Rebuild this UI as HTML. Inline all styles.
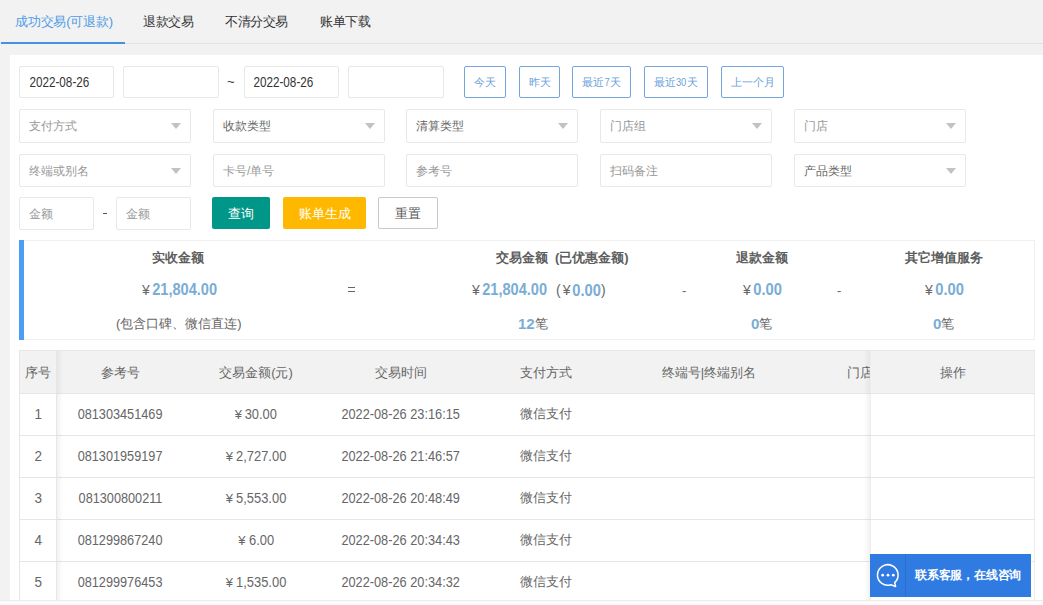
<!DOCTYPE html>
<html><head><meta charset="utf-8">
<style>
*{box-sizing:border-box;margin:0;padding:0}
html,body{width:1043px;height:605px;overflow:hidden;background:#f2f2f2;font-family:"Liberation Sans",sans-serif;color:#666}
.a{position:absolute}
.t{position:absolute;white-space:nowrap;line-height:1}
.sx{display:inline-block;transform-origin:50% 50%}
.box{position:absolute;background:#fff;border:1px solid #e8e8e8;border-radius:2px}
.sel::after{content:"";position:absolute;right:9px;top:13px;border-left:5px solid transparent;border-right:5px solid transparent;border-top:6px solid #c2c2c2}
.bb{position:absolute;border:1px solid #74a6dd;border-radius:2px;background:#fff;color:#6a9fdb;font-size:11px;line-height:31px;text-align:center;height:32px;top:66px}
.btn{position:absolute;top:197px;height:32px;border-radius:2px;font-size:13px;line-height:34px;text-align:center}
.th{position:absolute;top:350px;height:43px;line-height:45px;font-size:13px;color:#666;text-align:center;white-space:nowrap}
.num{color:#7aadd5;font-weight:bold}
.td{position:absolute;height:42px;line-height:42px;font-size:15px;color:#666;text-align:center;white-space:nowrap}
</style></head><body>
<!-- tabs -->
<div class="a" style="left:0;top:0;width:1043px;height:44px;border-bottom:1px solid #e2e2e2"></div>
<div class="a" style="left:1px;top:42px;width:124px;height:2px;background:#4391e2"></div>
<div class="t" id="tab1" style="left:15px;top:15px;font-size:13px;letter-spacing:-0.2px;color:#4d9be6">成功交易(可退款)</div>
<div class="t" id="tab2" style="letter-spacing:-0.4px;left:143px;top:15px;font-size:13px;color:#333">退款交易</div>
<div class="t" id="tab3" style="letter-spacing:-0.4px;left:225px;top:15px;font-size:13px;color:#333">不清分交易</div>
<div class="t" id="tab4" style="letter-spacing:-0.4px;left:320px;top:15px;font-size:13px;color:#333">账单下载</div>
<div class="a" style="left:10px;top:55px;width:1040px;height:546px;background:#fff"></div>
<div class="box" style="left:19px;top:66px;width:95px;height:32px"></div>
<div class="box" style="left:123px;top:66px;width:96px;height:32px"></div>
<div class="box" style="left:244px;top:66px;width:95px;height:32px"></div>
<div class="box" style="left:348px;top:66px;width:96px;height:32px"></div>
<div class="t" id="d1" style="left:29px;top:74px;font-size:15px;color:#333"><span class="sx" style="transform: scaleX(0.78); margin-left: -8.44px; margin-right: -8.44px;">2022-08-26</span></div>
<div class="t" id="tilde" style="left:227px;top:75px;font-size:13px;color:#333">~</div>
<div class="t" id="d2" style="left:253px;top:74px;font-size:15px;color:#333"><span class="sx" style="transform: scaleX(0.78); margin-left: -8.44px; margin-right: -8.44px;">2022-08-26</span></div>
<div class="bb" style="left:464px;width:42px">今天</div>
<div class="bb" style="left:519px;width:41px">昨天</div>
<div class="bb" style="left:572px;width:59px">最近<span class="sx" style="transform: scaleX(0.85); margin-left: -0.46px; margin-right: -0.46px;">7</span>天</div>
<div class="bb" style="left:644px;width:64px">最近<span class="sx" style="transform: scaleX(0.85); margin-left: -0.92px; margin-right: -0.92px;">30</span>天</div>
<div class="bb" style="left:721px;width:63px">上一个月</div>
<div class="box sel" style="left:19px;top:109px;width:172px;height:34px"></div>
<div class="t" style="left:29px;top:120px;font-size:12px;color:#999">支付方式</div>
<div class="box sel" style="left:213px;top:109px;width:172px;height:34px"></div>
<div class="t" style="left:223px;top:120px;font-size:12px;color:#666">收款类型</div>
<div class="box sel" style="left:406px;top:109px;width:172px;height:34px"></div>
<div class="t" style="left:416px;top:120px;font-size:12px;color:#666">清算类型</div>
<div class="box sel" style="left:600px;top:109px;width:172px;height:34px"></div>
<div class="t" style="left:610px;top:120px;font-size:12px;color:#999">门店组</div>
<div class="box sel" style="left:794px;top:109px;width:172px;height:34px"></div>
<div class="t" style="left:804px;top:120px;font-size:12px;color:#999">门店</div>
<div class="box sel" style="left:19px;top:154px;width:172px;height:33px"></div>
<div class="t" style="left:29px;top:165px;font-size:12px;color:#999">终端或别名</div>
<div class="box" style="left:213px;top:154px;width:172px;height:33px"></div>
<div class="t" style="left:223px;top:165px;font-size:12px;color:#999">卡号/单号</div>
<div class="box" style="left:406px;top:154px;width:172px;height:33px"></div>
<div class="t" style="left:416px;top:165px;font-size:12px;color:#999">参考号</div>
<div class="box" style="left:600px;top:154px;width:172px;height:33px"></div>
<div class="t" style="left:610px;top:165px;font-size:12px;color:#999">扫码备注</div>
<div class="box sel" style="left:794px;top:154px;width:172px;height:33px"></div>
<div class="t" style="left:804px;top:165px;font-size:12px;color:#666">产品类型</div>
<div class="box" style="left:19px;top:197px;width:75px;height:33px"></div>
<div class="box" style="left:116px;top:197px;width:75px;height:33px"></div>
<div class="t" style="left:29px;top:208px;font-size:12px;color:#999">金额</div>
<div class="t" style="left:126px;top:208px;font-size:12px;color:#999">金额</div>
<div class="a" style="left:103px;top:213px;width:4px;height:1px;background:#555"></div>
<div class="btn" style="left:212px;width:58px;background:#009688;color:#fff">查询</div>
<div class="btn" style="left:283px;width:83px;background:#ffb800;color:#fff">账单生成</div>
<div class="btn" style="left:378px;width:60px;background:#fff;border:1px solid #c9c9c9;color:#555;line-height:32px">重置</div>
<div class="a" style="left:19px;top:240px;width:1016px;height:100px;border:1px solid #f0f0f0;border-left:none"></div>
<div class="a" style="left:19px;top:240px;width:5px;height:100px;background:#4a9ff5"></div>
<div class="t" id="sm1" style="left:152px;font-size:13px;font-weight:bold;color:#5e5e5e;top:251px">实收金额</div>
<div class="t" id="sm4" style="left:496px;font-size:13px;font-weight:bold;color:#5e5e5e;top:251px">交易金额</div>
<div class="t" id="sm5" style="left:555px;font-size:13px;font-weight:bold;color:#5e5e5e;top:251px">(已优惠金额)</div>
<div class="t" id="sm9" style="left:736px;font-size:13px;font-weight:bold;color:#5e5e5e;top:251px">退款金额</div>
<div class="t" id="sm12" style="left:905px;font-size:13px;font-weight:bold;color:#5e5e5e;top:251px">其它增值服务</div>
<div class="t" id="am1" style="left:142px;top:282px;font-size:16px;color:#666"><span style="font-size:14px;color:#666;margin-right:2px">¥</span><span class="sx" style="color: rgb(122, 173, 213); font-weight: bold; transform: scaleX(0.91); margin-left: -3.2px; margin-right: -3.2px;">21,804.00</span></div>
<div class="t" id="am2" style="left:472px;top:282px;font-size:16px;color:#666"><span style="font-size:14px;color:#666;margin-right:2px">¥</span><span class="sx" style="color: rgb(122, 173, 213); font-weight: bold; transform: scaleX(0.91); margin-left: -3.2px; margin-right: -3.2px;">21,804.00</span></div>
<div class="t" id="am3" style="left:556px;top:283px;font-size:14px;color:#666">(<span style="margin-left:2px"></span><span style="font-size:14px;color:#666;margin-right:2px">¥</span><span class="sx" style="color: rgb(122, 173, 213); font-weight: bold; font-size: 16px; vertical-align: -1px; transform: scaleX(0.92); margin-left: -1.25px; margin-right: -1.25px;">0.00</span>)</div>
<div class="t" id="am4" style="left:743px;top:282px;font-size:16px;color:#666"><span style="font-size:14px;color:#666;margin-right:2px">¥</span><span class="sx" style="color: rgb(122, 173, 213); font-weight: bold; transform: scaleX(0.92); margin-left: -1.25px; margin-right: -1.25px;">0.00</span></div>
<div class="t" id="am5" style="left:925px;top:282px;font-size:16px;color:#666"><span style="font-size:14px;color:#666;margin-right:2px">¥</span><span class="sx" style="color: rgb(122, 173, 213); font-weight: bold; transform: scaleX(0.92); margin-left: -1.25px; margin-right: -1.25px;">0.00</span></div>
<div class="a" style="left:348px;top:287px;width:7px;height:1px;background:#666"></div><div class="a" style="left:348px;top:291px;width:7px;height:1px;background:#666"></div>
<div class="t" id="dash1" style="left:682px;top:284px;font-size:13px;color:#666">-</div>
<div class="t" id="dash2" style="left:837px;top:284px;font-size:13px;color:#666">-</div>
<div class="t" id="sm3" style="left:116px;top:317px;font-size:13px;color:#666">(包含口碑、微信直连)</div>
<div class="t" id="c1" style="left:518px;top:316px;font-size:13px;color:#666"><span class="num" style="font-size:15px;vertical-align:-1px">12</span>笔</div>
<div class="t" id="c2" style="left:751px;top:316px;font-size:13px;color:#666"><span class="num" style="font-size:15px;vertical-align:-1px">0</span>笔</div>
<div class="t" id="c3" style="left:933px;top:316px;font-size:13px;color:#666"><span class="num" style="font-size:15px;vertical-align:-1px">0</span>笔</div>
<div class="a" style="left:19px;top:350px;width:1016px;height:260px;border:1px solid #e6e6e6;background:#fff"></div>
<div class="a" style="left:20px;top:351px;width:1014px;height:42px;background:#f2f2f2"></div>
<div class="a" style="left:19px;top:393px;width:1016px;height:1px;background:#e6e6e6"></div>
<div class="a" style="left:19px;top:435px;width:1016px;height:1px;background:#e6e6e6"></div>
<div class="a" style="left:19px;top:477px;width:1016px;height:1px;background:#e6e6e6"></div>
<div class="a" style="left:19px;top:519px;width:1016px;height:1px;background:#e6e6e6"></div>
<div class="a" style="left:19px;top:561px;width:1016px;height:1px;background:#e6e6e6"></div>
<div class="a" style="left:19px;top:600px;width:1016px;height:1px;background:#e6e6e6"></div>
<div class="a" style="left:56px;top:351px;width:1px;height:250px;background:#e6e6e6"></div>
<div class="a" style="left:57px;top:351px;width:6px;height:250px;background:linear-gradient(to right,rgba(0,0,0,.05),rgba(0,0,0,0))"></div>
<div class="th" style="left:19px;width:38px">序号</div>
<div class="th" style="left:56px;width:128px">参考号</div>
<div class="th" style="left:184px;width:144px">交易金额(元)</div>
<div class="th" style="left:328px;width:145px">交易时间</div>
<div class="th" style="left:473px;width:146px">支付方式</div>
<div class="th" style="left:619px;width:180px">终端号|终端别名</div>
<div class="th" style="left:847px;width:40px;text-align:left">门店</div>
<div class="td" style="top:393px;left:19px;width:38px"><span class="sx" style="transform: scaleX(0.9); margin-left: -0.42px; margin-right: -0.42px;">1</span></div>
<div class="td" style="top:393px;left:56px;width:128px"><span class="sx" style="transform: scaleX(0.847); margin-left: -7.66px; margin-right: -7.66px;">081303451469</span></div>
<div class="td" style="top:393px;left:184px;width:144px"><span style="font-size:13px;margin-right:3px">¥</span><span class="sx" style="transform: scaleX(0.86); margin-left: -2.63px; margin-right: -2.63px;">30.00</span></div>
<div class="td" style="top:393px;left:328px;width:145px"><span class="sx" style="transform: scaleX(0.851); margin-left: -10.38px; margin-right: -10.38px;">2022-08-26 23:16:15</span></div>
<div class="td" style="top:393px;left:473px;width:146px;font-size:13px">微信支付</div>
<div class="td" style="top:435px;left:19px;width:38px"><span class="sx" style="transform: scaleX(0.9); margin-left: -0.42px; margin-right: -0.42px;">2</span></div>
<div class="td" style="top:435px;left:56px;width:128px"><span class="sx" style="transform: scaleX(0.847); margin-left: -7.66px; margin-right: -7.66px;">081301959197</span></div>
<div class="td" style="top:435px;left:184px;width:144px"><span style="font-size:13px;margin-right:3px">¥</span><span class="sx" style="transform: scaleX(0.86); margin-left: -4.09px; margin-right: -4.09px;">2,727.00</span></div>
<div class="td" style="top:435px;left:328px;width:145px"><span class="sx" style="transform: scaleX(0.851); margin-left: -10.38px; margin-right: -10.38px;">2022-08-26 21:46:57</span></div>
<div class="td" style="top:435px;left:473px;width:146px;font-size:13px">微信支付</div>
<div class="td" style="top:477px;left:19px;width:38px"><span class="sx" style="transform: scaleX(0.9); margin-left: -0.42px; margin-right: -0.42px;">3</span></div>
<div class="td" style="top:477px;left:56px;width:128px"><span class="sx" style="transform: scaleX(0.847); margin-left: -7.57px; margin-right: -7.57px;">081300800211</span></div>
<div class="td" style="top:477px;left:184px;width:144px"><span style="font-size:13px;margin-right:3px">¥</span><span class="sx" style="transform: scaleX(0.86); margin-left: -4.09px; margin-right: -4.09px;">5,553.00</span></div>
<div class="td" style="top:477px;left:328px;width:145px"><span class="sx" style="transform: scaleX(0.851); margin-left: -10.38px; margin-right: -10.38px;">2022-08-26 20:48:49</span></div>
<div class="td" style="top:477px;left:473px;width:146px;font-size:13px">微信支付</div>
<div class="td" style="top:519px;left:19px;width:38px"><span class="sx" style="transform: scaleX(0.9); margin-left: -0.42px; margin-right: -0.42px;">4</span></div>
<div class="td" style="top:519px;left:56px;width:128px"><span class="sx" style="transform: scaleX(0.847); margin-left: -7.66px; margin-right: -7.66px;">081299867240</span></div>
<div class="td" style="top:519px;left:184px;width:144px"><span style="font-size:13px;margin-right:3px">¥</span><span class="sx" style="transform: scaleX(0.86); margin-left: -2.04px; margin-right: -2.04px;">6.00</span></div>
<div class="td" style="top:519px;left:328px;width:145px"><span class="sx" style="transform: scaleX(0.851); margin-left: -10.38px; margin-right: -10.38px;">2022-08-26 20:34:43</span></div>
<div class="td" style="top:519px;left:473px;width:146px;font-size:13px">微信支付</div>
<div class="td" style="top:561px;left:19px;width:38px"><span class="sx" style="transform: scaleX(0.9); margin-left: -0.42px; margin-right: -0.42px;">5</span></div>
<div class="td" style="top:561px;left:56px;width:128px"><span class="sx" style="transform: scaleX(0.847); margin-left: -7.66px; margin-right: -7.66px;">081299976453</span></div>
<div class="td" style="top:561px;left:184px;width:144px"><span style="font-size:13px;margin-right:3px">¥</span><span class="sx" style="transform: scaleX(0.86); margin-left: -4.09px; margin-right: -4.09px;">1,535.00</span></div>
<div class="td" style="top:561px;left:328px;width:145px"><span class="sx" style="transform: scaleX(0.851); margin-left: -10.38px; margin-right: -10.38px;">2022-08-26 20:34:32</span></div>
<div class="td" style="top:561px;left:473px;width:146px;font-size:13px">微信支付</div>
<div class="a" style="left:864px;top:351px;width:6px;height:250px;background:linear-gradient(to left,rgba(0,0,0,.05),rgba(0,0,0,0))"></div>
<div class="a" style="left:870px;top:351px;width:165px;height:250px;background:#fff;border-left:1px solid #eee;border-right:1px solid #ececec"></div>
<div class="a" style="left:871px;top:351px;width:163px;height:42px;background:#f2f2f2"></div>
<div class="a" style="left:870px;top:393px;width:165px;height:1px;background:#e6e6e6"></div>
<div class="a" style="left:870px;top:435px;width:165px;height:1px;background:#e6e6e6"></div>
<div class="a" style="left:870px;top:477px;width:165px;height:1px;background:#e6e6e6"></div>
<div class="a" style="left:870px;top:519px;width:165px;height:1px;background:#e6e6e6"></div>
<div class="a" style="left:870px;top:561px;width:165px;height:1px;background:#e6e6e6"></div>
<div class="a" style="left:870px;top:600px;width:165px;height:1px;background:#e6e6e6"></div>
<div class="th" style="left:871px;width:163px">操作</div>
<div class="a" style="left:0;top:600px;width:1043px;height:5px;background:#fbfbfb;border-top:1px solid #ececec"></div>
<div class="a" style="left:870px;top:554px;width:161px;height:43px;background:#2f7be2"></div>
<div class="a" style="left:905px;top:554px;width:1px;height:43px;background:#2a6fcc"></div>
<svg class="a" style="left:870px;top:554px" width="36" height="43" viewBox="0 0 36 43"><path d="M20.98 30.80 A10.3 10.3 0 1 1 24.69 28.65 L25.6 32.6 Z" fill="none" stroke="#fff" stroke-width="1.5" stroke-linejoin="round"></path><circle cx="12.7" cy="21.2" r="1.4" fill="#fff"></circle><circle cx="18" cy="21.2" r="1.4" fill="#fff"></circle><circle cx="23.3" cy="21.2" r="1.4" fill="#fff"></circle></svg>
<div class="t" id="chat" style="left:915px;top:569px;font-size:12px;font-weight:bold;letter-spacing:-0.2px;color:#fff">联系客服，在线咨询</div>

</body></html>
